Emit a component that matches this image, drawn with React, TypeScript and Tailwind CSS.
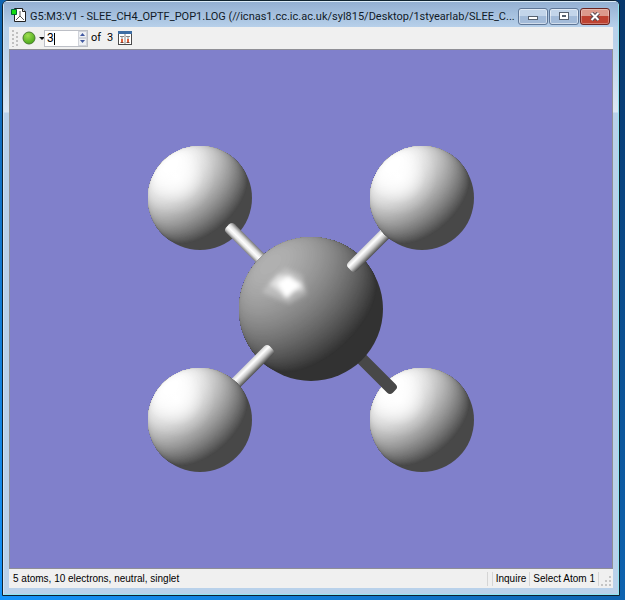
import { useState } from "react";

type Vec = [number, number, number];

const LIGHT: Vec = [-0.57, -0.63, 0.53];

// Where the shading fades out completely, a bit beyond the terminator
const SHADE_START = -0.18;

// Outline of the part of a unit sphere where the light falls at `c` or more.
// Points on the far side are pushed just past the rim, the clip trims them.
const litRegion = (c: number) => {
  const [lx, ly, lz] = LIGHT;
  const flat = Math.hypot(lx, ly);
  const u: Vec = [-ly / flat, lx / flat, 0];
  const v: Vec = [-lz * u[1], lz * u[0], lx * u[1] - ly * u[0]];
  const r = Math.sqrt(1 - c * c);
  const points: string[] = [];
  for (let i = 0; i < 72; i++) {
    const a = (i / 72) * Math.PI * 2;
    const p = [0, 1, 2].map(
      (k) => c * LIGHT[k] + r * (Math.cos(a) * u[k] + Math.sin(a) * v[k])
    );
    const scale = p[2] < 0 ? 1.04 / Math.hypot(p[0], p[1]) : 1;
    points.push(`${(p[0] * scale).toFixed(3)},${(p[1] * scale).toFixed(3)}`);
  }
  return points.join(" ");
};

const LEVELS = Array.from({ length: 72 }, (_, i) => i / 72);

const ShadedSphere = ({
  id,
  ambient,
  diffuse,
}: {
  id: string;
  ambient: number;
  diffuse: number;
}) => (
  <g id={id} clipPath="url(#rim)">
    <circle r="1.1" fill={`rgb(${ambient},${ambient},${ambient})`} />
    {LEVELS.map((t) => {
      const g = Math.min(255, Math.round(ambient + diffuse * t));
      return (
        <polygon
          key={t}
          points={litRegion(SHADE_START + (1 - SHADE_START) * t)}
          fill={`rgb(${g},${g},${g})`}
        />
      );
    })}
  </g>
);

const Hydrogen = ({ x, y }: { x: number; y: number }) => (
  <g transform={`translate(${x} ${y}) scale(52)`}>
    <use href="#hydrogen" />
    <circle r="1" fill="url(#gloss)" />
  </g>
);

const Bond = ({
  x,
  y,
  angle,
  length,
  fill,
}: {
  x: number;
  y: number;
  angle: number;
  length: number;
  fill: string;
}) => (
  <rect
    x="-6"
    y="-6"
    width={length}
    height="12"
    rx="4"
    fill={fill}
    transform={`translate(${x} ${y}) rotate(${angle})`}
  />
);

const Molecule = () => (
  <svg
    viewBox="10 50 602 518"
    className="block w-full flex-1"
    role="img"
    aria-label="Methane molecule"
  >
    <defs>
      <clipPath id="rim">
        <circle r="1" />
      </clipPath>
      <ShadedSphere id="hydrogen" ambient={72} diffuse={186} />
      <ShadedSphere id="carbon" ambient={50} diffuse={128} />
      <radialGradient id="gloss" gradientUnits="userSpaceOnUse" cx="-0.46" cy="-0.42" r="0.75">
        <stop offset="0" stopColor="#fff" />
        <stop offset="0.35" stopColor="#fff" stopOpacity="0.65" />
        <stop offset="0.7" stopColor="#fff" stopOpacity="0.15" />
        <stop offset="1" stopColor="#fff" stopOpacity="0" />
      </radialGradient>
      <linearGradient id="bondEven" x1="0" y1="0" x2="0" y2="1">
        <stop offset="0" stopColor="#777" />
        <stop offset="0.3" stopColor="#e0e0e0" />
        <stop offset="0.55" stopColor="#fff" />
        <stop offset="0.75" stopColor="#e4e4e4" />
        <stop offset="1" stopColor="#808080" />
      </linearGradient>
      <linearGradient id="bondSide" x1="0" y1="0" x2="0" y2="1">
        <stop offset="0" stopColor="#d2d2d2" />
        <stop offset="0.3" stopColor="#fff" />
        <stop offset="0.6" stopColor="#c8c8c8" />
        <stop offset="1" stopColor="#4c4c4c" />
      </linearGradient>
      <linearGradient id="bondSideFlipped" href="#bondSide" x1="0" y1="1" x2="0" y2="0" />
      <filter id="soft" x="-50%" y="-50%" width="200%" height="200%">
        <feGaussianBlur stdDeviation="2" />
      </filter>
    </defs>

    <Hydrogen x={200} y={198} />
    <Hydrogen x={422} y={420} />
    <Bond x={232} y={230} angle={45} length={60} fill="url(#bondEven)" />
    <Bond x={390} y={387} angle={225} length={60} fill="#484848" />

    <use href="#carbon" transform="translate(311 309) scale(72)" />
    <g filter="url(#soft)">
      <polygon points="262,292 277,274 286,268 302,275 307,294 289,304 277,299" fill="#fff" fillOpacity="0.25" />
      <polygon points="269,284 278,275 290,275 302,283 304,290 294,292 287,299 279,292" fill="#fff" fillOpacity="0.5" />
      <polygon points="277,283 288,276 301,285 286,298" fill="#fff" />
    </g>

    <Bond x={354} y={265} angle={-45} length={62} fill="url(#bondSide)" />
    <Bond x={267} y={352} angle={135} length={62} fill="url(#bondSideFlipped)" />
    <Hydrogen x={422} y={198} />
    <Hydrogen x={200} y={420} />
  </svg>
);

const FileIcon = () => (
  <svg viewBox="0 0 16 16" className="size-4 shrink-0" aria-hidden="true">
    <path d="M3.500 1.500h8l3 3v10h-11z" fill="#fff" stroke="#222" />
    <path d="M11.500 1.500v3h3" fill="#ddd" stroke="#222" />
    <path d="M9 4v5M9 9l-4 4M9 9l4 4" fill="none" stroke="#555" />
    <path d="M0.500 2.500h5v5h-5z" fill="#12dc12" stroke="#063" />
  </svg>
);

const TitleBar = () => (
  <header className="flex h-[25px] items-center bg-linear-to-b from-[#94b0d2] to-[#b7d0ea] pr-2 pl-[7px]">
    <FileIcon />
    <h1 className="mt-1 ml-[3px] min-w-0 flex-1 font-[Roboto,sans-serif] text-[11px] leading-4 whitespace-nowrap text-[#101a28]">
      G5:M3:V1 - SLEE_CH4_OPTF_POP1.LOG (//icnas1.cc.ic.ac.uk/syl815/Desktop/1styearlab/SLEE_C...
    </h1>
    <div className="mt-1 flex shrink-0 gap-px">
      <button
        aria-label="Minimize"
        className="flex h-[17px] w-[30px] items-center justify-center rounded-[3px] border border-[#5f7696] bg-linear-to-b from-[#c3d5ea] from-50% to-[#a3bbd9] to-50% inset-ring inset-ring-white/50"
      >
        <svg viewBox="0 0 12 9" className="h-[9px] w-3">
          <rect x="1.500" y="4.500" width="9" height="3" fill="#fff" stroke="#56606e" />
        </svg>
      </button>
      <button
        aria-label="Maximize"
        className="flex h-[17px] w-[30px] items-center justify-center rounded-[3px] border border-[#5f7696] bg-linear-to-b from-[#c3d5ea] from-50% to-[#a3bbd9] to-50% inset-ring inset-ring-white/50"
      >
        <svg viewBox="0 0 12 9" className="h-[9px] w-3">
          <rect x="1.500" y="0.500" width="9" height="7" fill="#fff" stroke="#56606e" />
          <rect x="4.500" y="3.500" width="3" height="1" fill="#9db4d0" stroke="#56606e" />
        </svg>
      </button>
      <button
        aria-label="Close"
        className="flex h-[17px] w-[30px] items-center justify-center rounded-[3px] border border-[#6b2420] bg-linear-to-b from-[#dc9a8c] from-50% to-[#be4231] to-50% inset-ring inset-ring-white/30"
      >
        <svg viewBox="0 0 12 9" className="h-[9px] w-3">
          <path d="M2.500 1l7 7M9.500 1l-7 7" stroke="#5a4a50" strokeWidth="4" />
          <path d="M2.500 1l7 7M9.500 1l-7 7" stroke="#fff" strokeWidth="2" />
        </svg>
      </button>
    </div>
  </header>
);

const Toolbar = () => {
  const [frame, setFrame] = useState("3");
  const step = (by: number) =>
    setFrame(String(Math.min(3, Math.max(1, Number(frame) + by))));

  return (
    <div className="flex h-[22px] items-center bg-[#f0f0f0] pl-[3px] font-[Roboto,sans-serif] text-xs leading-4 text-black">
      <svg viewBox="0 0 7 18" className="h-[18px] w-[7px]" aria-hidden="true">
        <path d="M1 1v17M5 3v15" stroke="#c0c0c0" strokeWidth="2" strokeDasharray="2 2" />
      </svg>
      <button aria-label="Frame mode" className="ml-[3px] flex items-center">
        <svg viewBox="0 0 23 14" className="h-[14px] w-[23px]">
          <defs>
            <radialGradient id="green" cx="0.4" cy="0.3" r="0.7">
              <stop offset="0" stopColor="#9fdf50" />
              <stop offset="1" stopColor="#4aa81c" />
            </radialGradient>
          </defs>
          <circle cx="7" cy="7" r="6" fill="url(#green)" stroke="#4a7a30" />
          <path d="M17 6h6l-3 3z" fill="#111" />
        </svg>
      </button>
      <div className="-ml-px flex h-[17px] w-11 border border-[#bcbfc6] bg-white">
        <div className="relative flex flex-1">
          <input
            aria-label="Frame number"
            value={frame}
            onChange={(e) => setFrame(e.target.value)}
            className="w-0 min-w-0 flex-1 pl-0.5 leading-4 caret-transparent outline-none"
          />
          <span className="pointer-events-none absolute top-0.5 left-[9px] h-3 w-px bg-black" />
        </div>
        <div className="flex w-[9px] flex-col bg-[#eef0f4]">
          <button aria-label="Next frame" onClick={() => step(1)} className="flex flex-1 items-center justify-center border border-[#d0d3da]">
            <svg viewBox="0 0 5 3" className="h-[3px] w-[5px]">
              <path d="M0 3h5l-2.500-3z" fill="#4058a0" />
            </svg>
          </button>
          <button aria-label="Previous frame" onClick={() => step(-1)} className="flex flex-1 items-center justify-center border border-[#d0d3da]">
            <svg viewBox="0 0 5 3" className="h-[3px] w-[5px]">
              <path d="M0 0h5l-2.500 3z" fill="#4058a0" />
            </svg>
          </button>
        </div>
      </div>
      <span className="ml-[3px] text-[11px]">of</span>
      <span className="ml-1.5 text-[11px]">3</span>
      <button aria-label="Multiple views" className="ml-[5px]">
        <svg viewBox="0 0 14 14" className="size-[14px]">
          <rect x="0.500" y="0.500" width="13" height="13" fill="#fff" stroke="#4a4a4a" />
          <rect x="0" y="0" width="14" height="3" fill="#3d6da3" />
          <path d="M2 5.500h4M4 5v3M8 5.500h4M10 5v3M7 3v10" stroke="#888" />
          <path d="M4 8v3M10 8v3" stroke="#e06038" strokeWidth="2" />
          <path d="M2.500 11.500h3M8.500 11.500h3" stroke="#74443a" />
        </svg>
      </button>
    </div>
  );
};

const StatusBar = () => (
  <footer className="flex h-[19px] items-center bg-[#f0f0f0] pl-1 font-['Liberation_Sans',Arial,sans-serif] text-[10px] leading-4 text-black">
    <p className="flex-1">5 atoms, 10 electrons, neutral, singlet</p>
    <span className="h-[14px] w-[6px] border-x border-[#d5d5d5]" />
    <span className="px-[3px]">Inquire</span>
    <span className="h-[14px] w-px bg-[#d5d5d5]" />
    <span className="px-[3px]">Select Atom 1</span>
    <span className="h-[14px] w-px bg-[#d5d5d5]" />
    <svg viewBox="0 0 14 14" className="h-[14px] w-[14px]" aria-hidden="true">
      <path d="M10 4h2v2h-2zM10 8h2v2h-2zM10 12h2v2h-2zM6 8h2v2h-2zM6 12h2v2h-2zM2 12h2v2h-2z" fill="#c4c4c4" />
    </svg>
  </footer>
);

const App = () => (
  <div className="flex min-h-screen flex-col bg-linear-to-tr from-[#1594fa] to-[#07376c] pr-[5px] pb-[5px] pl-[2px]">
    <div className="flex flex-1 flex-col rounded-t-md border border-[#10222e] bg-[#b9d1ea]">
      <div className="flex flex-1 flex-col rounded-t-[5px] border border-[#8fe4f2] border-t-[#dcecf8] border-l-[#d0e4f4] bg-[linear-gradient(#b9d1ea_40px,#dce8f4_110px,#b9d1ea_111px)]">
        <TitleBar />
        <main className="mx-[5px] mb-[6px] flex flex-1 flex-col">
          <Toolbar />
          <div className="flex flex-1 flex-col border border-[#8f8f96] bg-[#8080cb]">
            <Molecule />
          </div>
          <StatusBar />
        </main>
      </div>
    </div>
  </div>
);

export default App;
